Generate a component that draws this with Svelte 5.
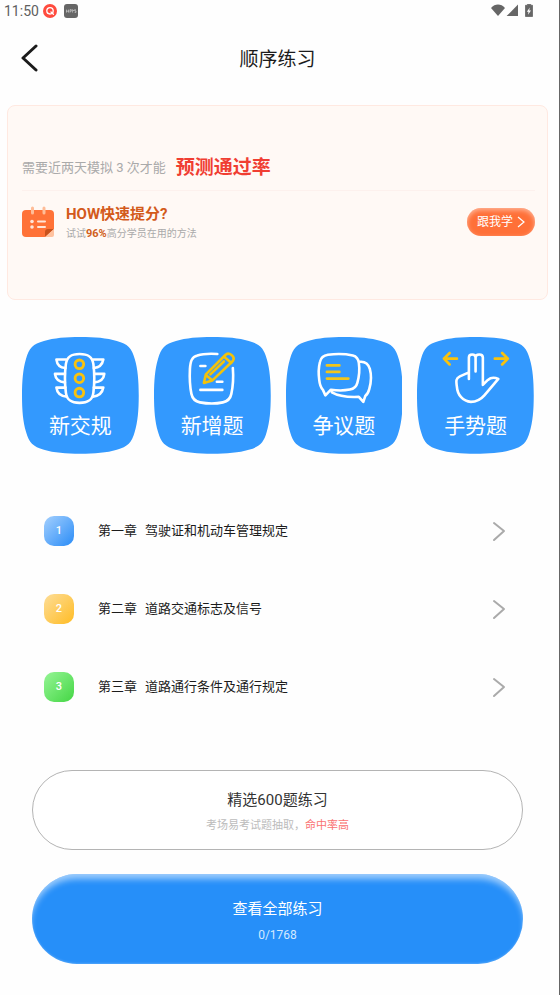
<script>
  const topics = [
    { kind: 'light', label: '新交规' },
    { kind: 'note', label: '新增题' },
    { kind: 'chat', label: '争议题' },
    { kind: 'hand', label: '手势题' }
  ];
  const chapters = [
    { n: 1, part: '第一章', name: '驾驶证和机动车管理规定', tone: 'blue' },
    { n: 2, part: '第二章', name: '道路交通标志及信号', tone: 'amber' },
    { n: 3, part: '第三章', name: '道路通行条件及通行规定', tone: 'green' }
  ];
</script>

<div class="page">
  <div class="status">
    <span class="time">11:50</span>
    <svg width="14" height="14" viewBox="0 0 14 14" aria-hidden="true">
      <circle cx="7" cy="7" r="7" fill="#ff4b3e" />
      <circle cx="7" cy="6.8" r="3.2" fill="none" stroke="#fff" stroke-width="1.3" />
      <path d="M8 8l2.4 2.2" stroke="#fff" stroke-width="1.3" stroke-linecap="round" />
    </svg>
    <svg class="app" width="14" height="14" viewBox="0 0 14 14" aria-hidden="true">
      <rect width="14" height="14" rx="3" fill="#666" />
      <path d="M2.5 5.6v3M2.5 7.2h2M4.5 5.6v3M6 8.6v-3h1.3v1.6H6M8.6 8.6v-3l.9 1.2.9-1.2M12 5.8h-1.2v1.2H12v1.4h-1.4" fill="none" stroke="#ddd" stroke-width=".6" />
    </svg>
    <svg class="signals" width="44" height="14" viewBox="0 0 44 14" aria-hidden="true">
      <path d="M0 3.900C4-.6 10-.6 14 3.900L7 12z" fill="#666" />
      <path d="M27 .5v11.600H15.600z" fill="#666" />
      <path d="M34.500 1.300h2V.3h3.200v1h1.800V12.500h-7z" fill="#666" stroke="#666" stroke-width=".8" stroke-linejoin="round" />
      <path d="M38.800 3.500l-3 4.200h1.700l-.5 3 3-4.200h-1.800z" fill="#fff" />
    </svg>
  </div>

  <header>
    <button class="back" aria-label="返回">
      <svg width="18" height="28" viewBox="0 0 18 28"><path d="M15 2L2 14l13 12" fill="none" stroke="#1b1b1b" stroke-width="3" stroke-linecap="round" stroke-linejoin="round" /></svg>
    </button>
    <h1>顺序练习</h1>
  </header>

  <section class="card">
    <p class="predict"><span>需要近两天模拟 3 次才能</span><strong>预测通过率</strong></p>
    <div class="tip">
      <svg width="32" height="32" viewBox="0 0 32 32" aria-hidden="true">
        <path d="M4 4h24a4 4 0 0 1 4 4v15l-8 8H4a4 4 0 0 1-4-4V8a4 4 0 0 1 4-4z" fill="#ff7237" />
        <path d="M23 31v-5a3 3 0 0 1 3-3h6z" fill="#c8521c" />
        <path d="M32 23v6a2 2 0 0 1-2 2h-7z" fill="#ffc29f" />
        <path d="M10.500 2v5M22 2v5" stroke="#ffbd98" stroke-width="3" stroke-linecap="round" />
        <path d="M16 15.500h7M16 21h7" stroke="#ffe5d8" stroke-width="2" stroke-linecap="round" />
        <circle cx="10" cy="15.500" r="1.800" fill="#ffe5d8" /><circle cx="10" cy="21" r="1.800" fill="#ffe5d8" />
      </svg>
      <div class="tip-text">
        <h2>HOW快速提分?</h2>
        <p>试试<b>96%</b>高分学员在用的方法</p>
      </div>
      <button class="follow">跟我学
        <svg width="8" height="12" viewBox="0 0 8 12" aria-hidden="true"><path d="M1 1l6 5-6 5" fill="none" stroke="#fff" stroke-width="1.200" /></svg>
      </button>
    </div>
  </section>

  <nav class="topics">
    {#each topics as t}
      <button>
        <svg viewBox="0 0 117 117" fill="none" stroke-linecap="round" stroke-linejoin="round" aria-hidden="true">
          <path fill="#3399fe" d="M0 58.500C0 44 1 32 4 22C7 11 11 7 22 4C32 1 44 0 58.500 0S85 1 95 4C106 7 110 11 113 22C116 32 117 44 117 58.500S116 85 113 95C110 106 106 110 95 113C85 116 73 117 58.500 117S32 116 22 113C11 110 7 106 4 95C1 85 0 73 0 58.500z" />
          {#if t.kind === 'light'}
            <g stroke="#fff" stroke-width="2.600">
              <path d="M57.700 17C66 17 70.500 19.500 71.500 27C72.700 36 72.700 47 71.500 56C70.500 63.500 66 66 57.700 66S45 63.500 44 56C42.800 47 42.800 36 44 27C45 19.500 49.500 17 57.700 17z" />
              <path d="M44 22.600H34.500Q35.500 30.500 43.500 31M43 37H33Q34 45 43 45.500M43.500 50.700H34.500Q35.500 59 45 59.800M71.500 22.600H81.500Q80 30.500 72 31M72.500 37H82.500Q81.500 45 72.500 45.500M72 50.700H81.500Q80 59 71 59.800" />
            </g>
            <g stroke="#f8c20e" stroke-width="2.900">
              <circle cx="57.500" cy="27.400" r="4.300" /><circle cx="57.500" cy="41.400" r="4.300" /><circle cx="57.500" cy="55.700" r="4.300" />
            </g>
          {:else if t.kind === 'note'}
            <path stroke="#fff" stroke-width="2.600" d="M63.500 17C55 16.500 48 17 43.500 18.500C38 20 36.500 24 36 32C35.500 42 36 50 37.500 57C38.500 62 41 64.500 46 65.500C54 67 62 67 69 65.500C74 64.500 76.500 62 77.500 57C79.500 48 79.700 40 79 31M46.500 29H51.500M63 44.800H68.500M46.500 53H68.500" />
            <path stroke="#f2c20b" stroke-width="2.600" d="M50 46L52 37.500L71.500 18C75 14.500 82 19.500 79 24L58.500 43.500zM52 38L58 43M70 19.500L77.500 26M56.500 37.500L70 24.500" />
          {:else if t.kind === 'chat'}
            <path stroke="#fff" stroke-width="2.600" d="M39.500 58.500L37 53C34.500 50.500 33.800 48 33.300 43C32.500 37 32.500 31 34 25C35 20.500 37 18.500 42 17.800C50 16.800 60 17 67 18.500C71 19.500 72.500 22 73 26C74 33 73.500 39 71.500 46C70.500 50 68.500 51.800 64 52.700C57 54 51 53.700 45 52.800zM74.500 24.800C80 24.500 82.500 27 84 32C86 39 85.500 45 83.500 52C82.500 56 81 58 79.500 59L77.500 65L73 60C63 60.500 53 59.500 46 55.500" />
            <path stroke="#f2c51b" stroke-width="2.700" d="M41 28.500H53.500M41 35H53.500M41 41.700H62.500" />
          {:else}
            <path stroke="#fff" stroke-width="2.600" d="M52 42V20.500C52 16.500 58.500 16.500 58.700 20.500V34.500V20.500C58.700 16.500 66 16.500 66 20.500V48L71 43C74 40.500 78 40.500 81.500 42L67.500 58.500C64 62.500 59.500 65 54 65C46 64.500 40.500 58 40 50C39 43.500 39 41.500 43 39.500L52 35.500" />
            <path stroke="#f8c20e" stroke-width="2.700" d="M40 21.700H27M32.700 16L27 21.700L32.700 27.500M78 21.700H91M85.300 16L91 21.700L85.300 27.500" />
          {/if}
        </svg>
        <span>{t.label}</span>
      </button>
    {/each}
  </nav>

  <ul class="chapters">
    {#each chapters as c}
      <li>
        <a href="#chapter-{c.n}">
          <span class="badge {c.tone}">{c.n}</span>
          <span>{c.part}</span>
          <span class="name">{c.name}</span>
          <svg width="14" height="22" viewBox="0 0 14 22" aria-hidden="true"><path d="M2 3l10 8-10 9" fill="none" stroke="#aaa" stroke-width="2" stroke-linecap="round" stroke-linejoin="round" /></svg>
        </a>
      </li>
    {/each}
  </ul>

  <div class="actions">
    <button class="picked">
      <span class="main">精选600题练习</span>
      <span class="sub">考场易考试题抽取，<em>命中率高</em></span>
    </button>
    <button class="all">
      <span class="main">查看全部练习</span>
      <span class="sub">0/1768</span>
    </button>
  </div>
</div>

<style>
  :global(body) { margin: 0; background: #fff; }
  .page {
    box-sizing: border-box;
    min-height: 100vh;
    padding-bottom: 31px;
    border-right: 1px solid #666;
    background: #fefefe;
    color: #1c1c1c;
    font-family: Roboto, "Noto Sans CJK SC", sans-serif;
  }
  h1, h2, p, ul { margin: 0; padding: 0; font-weight: 400; }
  button {
    margin: 0;
    padding: 0;
    border: 0;
    background: none;
    color: inherit;
    font-family: inherit;
    cursor: pointer;
  }
  svg { display: block; flex: none; }

  .status { display: flex; align-items: center; height: 21px; padding: 0 24px 0 4px; }
  .time { margin-right: 4px; color: #606060; font-size: 14px; line-height: 20px; }
  .app { margin-left: 7px; }
  .signals { margin-left: auto; }

  header {
    display: grid;
    grid-template-columns: 40px 1fr 40px;
    align-items: center;
    height: 74px;
    padding-left: 21px;
    padding-right: 25px;
  }
  h1 { padding-top: 4px; font-size: 19px; line-height: 28px; text-align: center; }

  .card {
    box-sizing: border-box;
    margin: 10px 11px 0 7px;
    padding: 48px 12px 53px 14px;
    border: 1px solid #ffe9e1;
    border-radius: 8px;
    background: #fff9f5;
  }
  .predict {
    display: flex;
    align-items: center;
    gap: 10px;
    padding-bottom: 8px;
    border-bottom: 1px solid #fdf1ed;
    color: #aaa;
    font-size: 13px;
    line-height: 28px;
  }
  .predict strong { color: #f03e32; font-size: 19px; font-weight: 700; }
  .tip { display: flex; align-items: center; height: 48px; padding-top: 7px; }
  .tip-text { flex: 1; margin-left: 12px; padding-top: 2px; }
  h2 { color: #d35a1b; font-size: 15px; font-weight: 700; line-height: 22px; }
  .tip-text p { color: #aaa; font-size: 10px; line-height: 18px; }
  .tip-text b { color: #d06020; font-size: 11px; }
  .follow {
    display: flex;
    align-items: center;
    justify-content: center;
    gap: 4px;
    width: 68px;
    height: 28px;
    border-radius: 14px;
    background: #ff7038;
    box-shadow: inset 0 2px 5px rgba(255, 255, 255, 0.5);
    color: #fff;
    font-size: 12px;
    line-height: 20px;
  }

  .topics {
    display: grid;
    grid-template-columns: repeat(4, 1fr);
    gap: 15px;
    margin: 37px 25px 0 22px;
  }
  .topics button { display: grid; }
  .topics svg { grid-area: 1 / 1; width: 100%; }
  .topics span {
    grid-area: 1 / 1;
    align-self: end;
    padding-bottom: 13px;
    color: #fff;
    font-size: 21px;
    line-height: 30px;
    text-align: center;
  }

  .chapters { margin: 38px 53px 0 44px; list-style: none; }
  .chapters a {
    display: flex;
    align-items: center;
    height: 78px;
    gap: 8px;
    color: inherit;
    font-size: 13px;
    line-height: 20px;
    text-decoration: none;
  }
  .name { flex: 1; }
  .badge {
    width: 30px;
    height: 30px;
    margin-right: 16px;
    border-radius: 10px;
    color: #fff;
    font-size: 11px;
    font-weight: 500;
    line-height: 30px;
    text-align: center;
  }
  .blue { background: linear-gradient(135deg, #a4d0fe, #2a8cf7); }
  .amber { background: linear-gradient(135deg, #fddd98, #ffbc24); }
  .green { background: linear-gradient(135deg, #96f596, #44d644); }

  .actions { display: grid; gap: 24px; margin: 44px 36px 0 32px; }
  .actions button {
    box-sizing: border-box;
    display: flex;
    flex-direction: column;
    align-items: center;
    justify-content: center;
    gap: 4px;
    padding-top: 4px;
  }
  .main { font-size: 15px; line-height: 24px; }
  .sub { font-size: 11px; line-height: 20px; }
  .picked { height: 80px; border: 1px solid #b4b4b4; border-radius: 40px; background: #fff; }
  .picked .main { color: #333; }
  .picked .sub { color: #bcbcbc; }
  .picked em { color: #fa7272; font-style: normal; }
  .all {
    height: 90px;
    border-radius: 45px;
    background: #268ff9;
    box-shadow: inset 0 7px 6px -2px rgba(255, 255, 255, 0.55), inset 0 -1px 2px rgba(255, 255, 255, 0.2);
  }
  .all .main { color: #fff; }
  .all .sub { color: #d3e9ff; font-size: 12px; }
</style>
